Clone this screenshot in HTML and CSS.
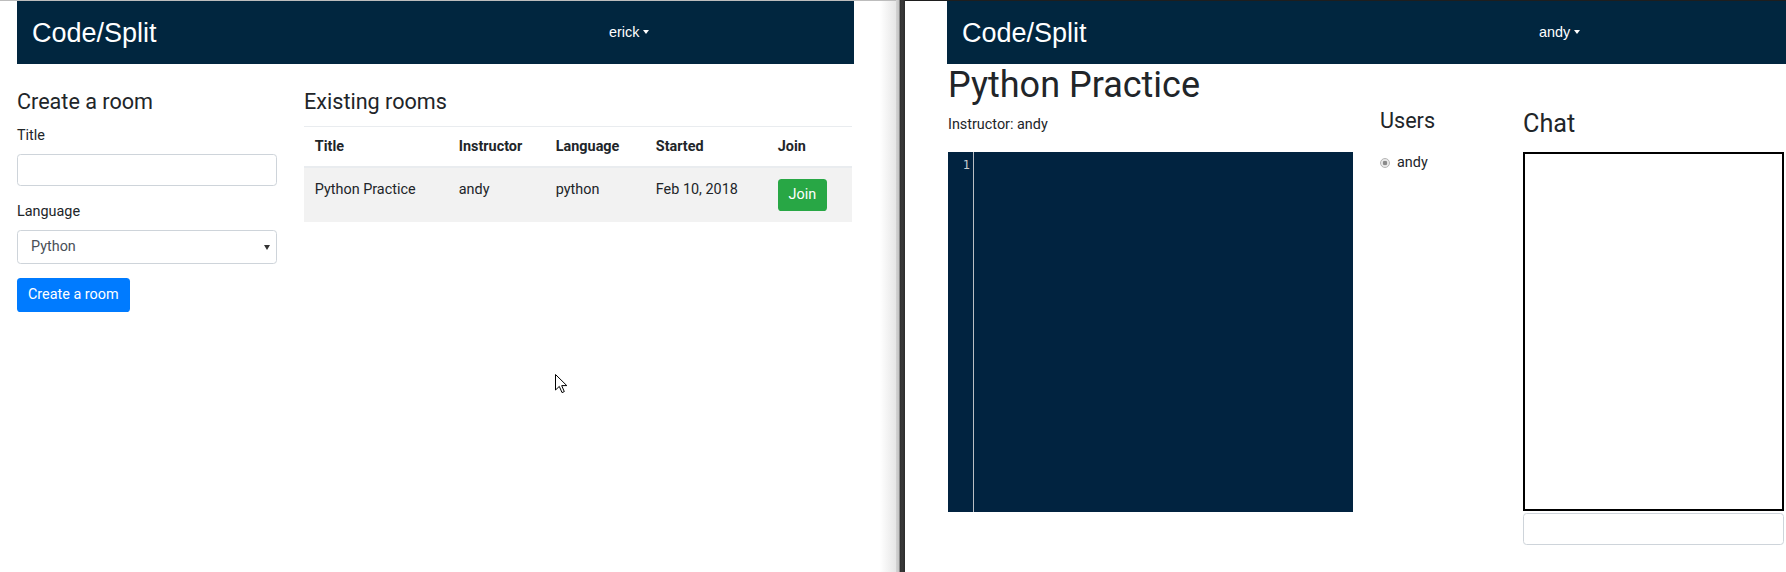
FILE: index.html
```html
<!DOCTYPE html>
<html lang="en">
<head>
<meta charset="utf-8">
<title>Code/Split</title>
<link rel="stylesheet" href="styles.css">
</head>
<body>
<div class="screen">
  <section class="win win-left">
    <nav class="navbar">
      <span class="brand">Code/Split</span>
      <span class="user">erick</span>
    </nav>
    <main class="lobby">
      <div class="create">
        <h4>Create a room</h4>
        <label class="lbl">Title</label>
        <input class="field" type="text">
        <label class="lbl">Language</label>
        <div class="field select">Python</div>
        <button class="btn btn-blue">Create a room</button>
      </div>
      <div class="rooms">
        <h4 class="rooms-title">Existing rooms</h4>
        <table class="table">
          <thead>
            <tr>
              <th class="c-title">Title</th>
              <th class="c-inst">Instructor</th>
              <th class="c-lang">Language</th>
              <th class="c-start">Started</th>
              <th class="c-join">Join</th>
            </tr>
          </thead>
          <tbody>
            <tr>
              <td>Python Practice</td>
              <td>andy</td>
              <td>python</td>
              <td>Feb 10, 2018</td>
              <td><button class="btn btn-green">Join</button></td>
            </tr>
          </tbody>
        </table>
      </div>
    </main>
    <svg class="cursor" width="13" height="20" viewBox="0 0 13 20">
      <path d="M0.5 0.5 L0.5 16 L4.3 12.4 L7 18.6 L9.3 17.6 L6.7 11.6 L11.8 11.6 Z" fill="#fff" stroke="#000" stroke-width="1" stroke-linejoin="miter"/>
    </svg>
  </section>
  <div class="shadow"></div>
  <div class="frame"></div>
  <section class="win win-right">
    <nav class="navbar navbar-wide">
      <span class="brand">Code/Split</span>
      <span class="user">andy</span>
    </nav>
    <main class="room">
      <h1 class="room-title">Python Practice</h1>
      <div class="room-grid">
        <div class="editor-col">
          <p class="instructor">Instructor: andy</p>
          <div class="editor">
            <div class="gutter">1</div>
            <div class="code"></div>
          </div>
        </div>
        <div class="users-col">
          <h4>Users</h4>
          <div class="user-row">
            <span class="radio"></span>
            <span>andy</span>
          </div>
        </div>
        <div class="chat-col">
          <h3 class="chat-title">Chat</h3>
          <div class="chat-box"></div>
          <input class="chat-input" type="text">
        </div>
      </div>
    </main>
  </section>
</div>
</body>
</html>
```

FILE: styles.css
```css
* { box-sizing: border-box; }

html, body {
  margin: 0;
  padding: 0;
}

body {
  width: 1786px;
  height: 572px;
  overflow: hidden;
  background: #fff;
  font-family: Roboto, "Noto Sans", sans-serif;
  font-size: 14.4px;
  line-height: 21.6px;
  color: #212529;
}

.screen {
  display: flex;
  height: 572px;
}

/* ---------- windows ---------- */
.win-left {
  position: relative;
  width: 880px;
  flex: none;
  border-top: 1px solid #bdbdbd;
  padding-left: 17px;
}

.shadow {
  width: 16px;
  flex: none;
  border-top: 1px solid #bdbdbd;
  background: linear-gradient(to right, #ffffff, #e6e6e6);
}

.frame {
  width: 9px;
  flex: none;
  background: linear-gradient(to right, #d4d4d4 0, #c4c4c4 3px, #8a8a8a 3px, #8a8a8a 4px, #2f2f2f 4px, #3a3a3a 6px, #2b2b2b 9px);
}

.win-right {
  flex: 1;
  min-width: 0;
  overflow: hidden;
  border-top: 1px solid #1e1e1e;
  padding-left: 42px;
}

/* ---------- navbar ---------- */
.navbar {
  width: 837px;
  height: 63px;
  background: #01263f;
  display: grid;
  grid-template-columns: 592px auto;
  align-items: center;
}

.navbar-wide { width: 845px; }

.brand {
  padding-left: 15px;
  font-family: "Liberation Sans", Arial, sans-serif;
  font-size: 27px;
  line-height: 30px;
  color: #fff;
}

.user {
  font-family: "Liberation Sans", Arial, sans-serif;
  font-size: 14.4px;
  color: #fff;
}

.user::after {
  content: "";
  display: inline-block;
  margin-left: 4px;
  vertical-align: 3px;
  border-top: 4px solid #fff;
  border-left: 3.5px solid transparent;
  border-right: 3.5px solid transparent;
}

/* ---------- headings ---------- */
h4 {
  margin: 0;
  font-size: 21.6px;
  line-height: 25.9px;
  font-weight: 400;
}

/* ---------- lobby ---------- */
.lobby {
  display: grid;
  grid-template-columns: 260px 548px;
  column-gap: 27px;
  padding-top: 24.5px;
}

.create h4 { margin-bottom: 10.6px; }

.lbl {
  display: block;
  margin-bottom: 7.4px;
}

.field {
  display: block;
  width: 260px;
  height: 32.4px;
  margin: 0 0 15px;
  border: 1px solid #ced4da;
  border-radius: 3.6px;
  background: #fff;
  font: inherit;
}

.select {
  position: relative;
  height: 33.4px;
  margin-bottom: 14px;
  padding: 0 13px;
  display: flex;
  align-items: center;
  color: #495057;
}

.select::after {
  content: "";
  position: absolute;
  right: 6px;
  top: 14px;
  border-top: 5px solid #333;
  border-left: 3px solid transparent;
  border-right: 3px solid transparent;
}

.btn {
  border: none;
  border-radius: 3.6px;
  color: #fff;
  font-family: Roboto, "Noto Sans", sans-serif;
  font-size: 14.4px;
  line-height: 21.6px;
  cursor: pointer;
}

.btn-blue {
  height: 34px;
  padding: 0 11px;
  background: #007bff;
}

.btn-green {
  display: block;
  height: 32.7px;
  padding: 0 10.8px;
  background: #28a745;
}

.rooms-title { margin-bottom: 11.1px; }

.table {
  width: 548px;
  border-collapse: collapse;
  table-layout: fixed;
}

.table th {
  text-align: left;
  font-weight: 700;
  padding: 9.5px 10.8px 8.2px;
  border-top: 1px solid #e9ecef;
  border-bottom: 2px solid #e9ecef;
}

.table td {
  padding: 10.8px;
  background: #f2f2f2;
  vertical-align: top;
}

.c-title { width: 144px; }
.c-inst { width: 97px; }
.c-lang { width: 100px; }
.c-start { width: 122px; }
.c-join { width: 85px; }

.cursor {
  position: absolute;
  left: 555px;
  top: 373px;
}

/* ---------- room ---------- */
.room { padding-left: 1px; }

.room-title {
  margin: 0;
  font-size: 36px;
  line-height: 43.2px;
  font-weight: 400;
}

.room-grid {
  display: grid;
  grid-template-columns: 405px 116px 261px;
  column-gap: 27px;
  align-items: start;
}

.instructor { margin: 7.2px 0 16px; }

.editor {
  display: flex;
  height: 360px;
  background: #012340;
}

.gutter {
  width: 26px;
  border-right: 1px solid #b9bec4;
  padding: 5px 3px 0 0;
  text-align: right;
  font-family: "DejaVu Sans Mono", monospace;
  font-size: 12px;
  line-height: 16px;
  color: #c8ccd0;
}

.code { flex: 1; }

.users-col { padding-top: 1px; }

.user-row {
  display: flex;
  align-items: center;
  gap: 7px;
  margin-top: 18px;
}

.radio {
  width: 10px;
  height: 10px;
  border-radius: 50%;
  border: 1px solid #b5b5b5;
  background: radial-gradient(circle, #8a8a8a 0, #8a8a8a 2px, #e8e8e8 2.6px);
}

.chat-title {
  margin: 1.5px 0 13px;
  font-size: 25.2px;
  line-height: 30.2px;
  font-weight: 400;
}

.chat-box {
  height: 359px;
  border: 2px solid #000;
}

.chat-input {
  display: block;
  width: 261px;
  height: 32.6px;
  margin-top: 1.7px;
  border: 1px solid #ced4da;
  border-radius: 3.6px;
  background: #fff;
}
```
